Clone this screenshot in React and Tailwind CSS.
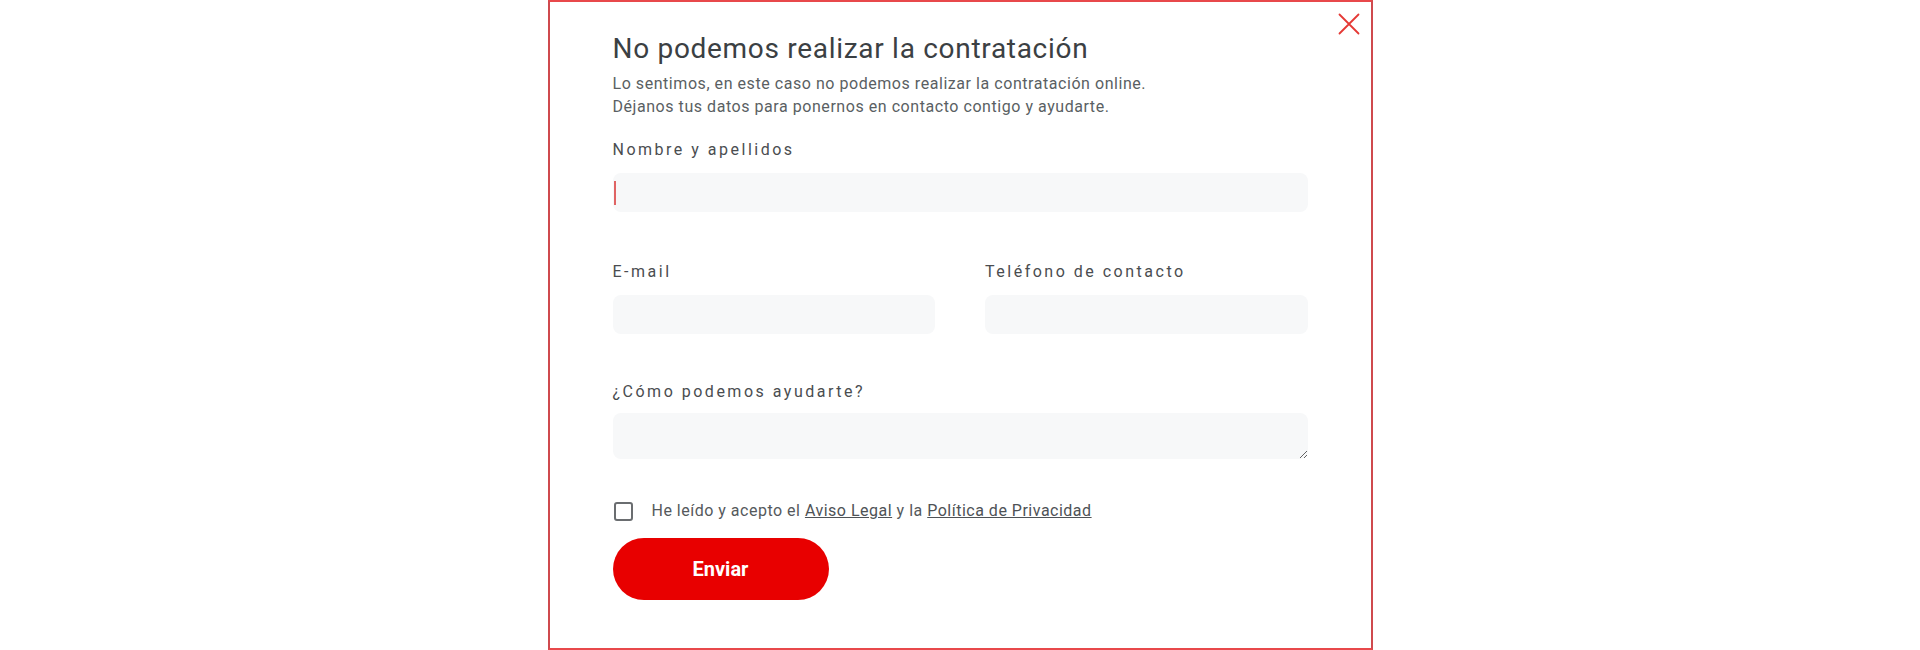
import React from "react";

const labelCls =
  "block text-[16px] leading-[24px] tracking-[2.5px] text-[#4a4d50]";
const fieldCls =
  "w-full h-[39px] mt-[11px] rounded-lg bg-[#f7f8f9] px-0 text-[16px] text-[#333] outline-none";

function CloseIcon() {
  return (
    <svg width="22" height="22" viewBox="0 0 22 22" fill="none">
      <path
        d="M1.5 1.5L20.5 20.5M20.5 1.5L1.5 20.5"
        stroke="#e53935"
        strokeWidth="1.8"
        strokeLinecap="round"
      />
    </svg>
  );
}

export default function App() {
  return (
    <div className="min-h-screen bg-white flex justify-center font-['Roboto',sans-serif]">
      <div className="relative w-[825px] h-[650px] bg-white border-2 border-y-[#e8484b] border-x-[#cf4a4e] px-[63px] pt-[30px]">
        {/* close */}
        <button className="absolute top-[11px] right-[11px] p-0 leading-none">
          <CloseIcon />
        </button>

        <h2 className="text-[28px] leading-[34px] tracking-[0.7px] font-normal text-[#3b4043]">
          No podemos realizar la contratación
        </h2>
        <p className="mt-[6px] text-[16px] leading-[23px] tracking-[0.55px] text-[#5a5f63]">
          Lo sentimos, en este caso no podemos realizar la contratación online.
          <br />
          Déjanos tus datos para ponernos en contacto contigo y ayudarte.
        </p>

        <form className="mt-[20px]" onSubmit={(e) => e.preventDefault()}>
          <div>
            <label className={labelCls}>Nombre y apellidos</label>
            <div className="relative">
              <input type="text" className={fieldCls} />
              <span className="absolute left-[1px] top-[19px] w-[2px] h-[24px] bg-[#e06464]" />
            </div>
          </div>

          <div className="grid grid-cols-2 gap-x-[50px] mt-[48px]">
            <div>
              <label className={labelCls}>E-mail</label>
              <input type="email" className={fieldCls} />
            </div>
            <div>
              <label className={labelCls}>Teléfono de contacto</label>
              <input type="tel" className={fieldCls} />
            </div>
          </div>

          <div className="mt-[46px]">
            <label className={labelCls}>¿Cómo podemos ayudarte?</label>
            <textarea
              className="block w-full h-[46px] mt-[9px] rounded-lg bg-[#f7f8f9] outline-none"
              rows={1}
            />
          </div>

          <div className="flex items-center gap-[19px] mt-[40px] h-[24px]">
            <span className="w-[19px] h-[19px] border-2 border-[#6a6d70] rounded-[3px] ml-[1px]" />
            <span className="text-[16px] leading-[24px] tracking-[0.5px] text-[#55595c]">
              He leído y acepto el{" "}
              <a href="#" className="underline text-[#4e5256]">
                Aviso Legal
              </a>{" "}
              y la{" "}
              <a href="#" className="underline text-[#4e5256]">
                Política de Privacidad
              </a>
            </span>
          </div>

          <button
            type="submit"
            className="mt-[15px] w-[216px] h-[62px] rounded-full bg-[#e80000] text-white text-[20px] font-bold"
          >
            Enviar
          </button>
        </form>
      </div>
    </div>
  );
}
